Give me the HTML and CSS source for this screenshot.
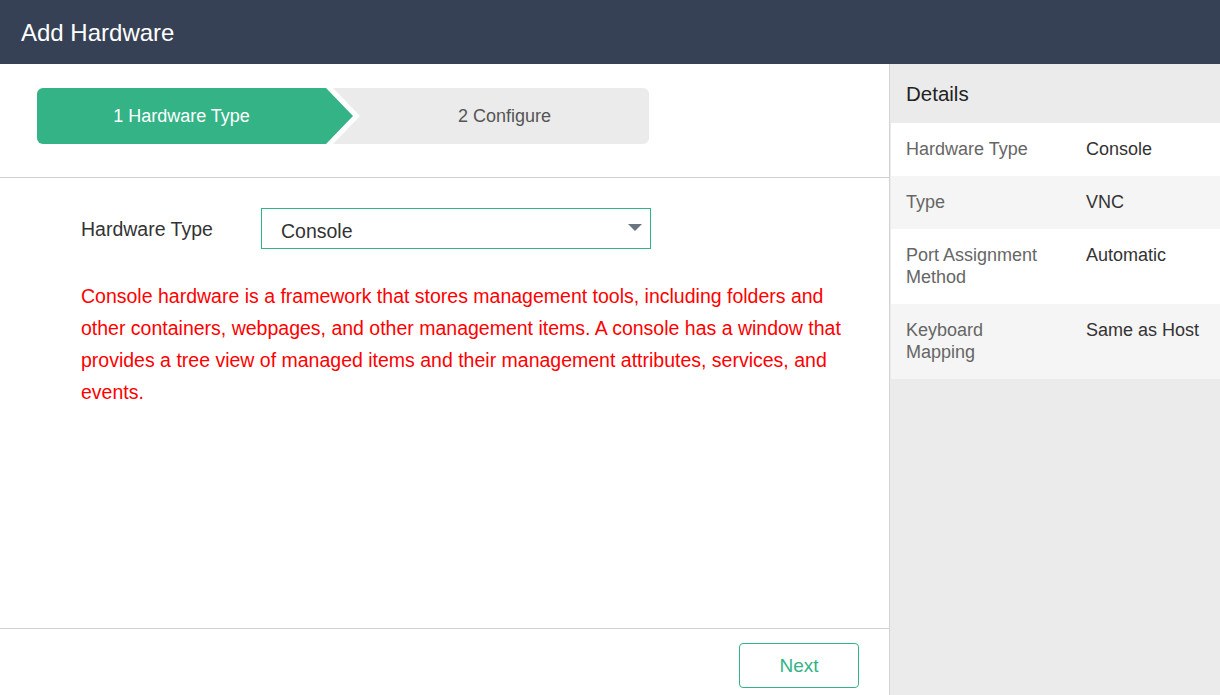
FILE: index.html
```html
<!DOCTYPE html>
<html lang="en">
<head>
    <meta charset="UTF-8">
    <meta name="viewport" content="width=device-width, initial-scale=1.0">
    <title>Add Hardware</title>
    <link rel="stylesheet" href="styles.css">
</head>
<body>
    <header class="title-bar">
        <h1>Add Hardware</h1>
    </header>

    <div class="wizard">
        <div class="main">
            <div class="steps-wrap">
                <div class="steps">
                    <div class="step step-active">1 Hardware Type</div>
                    <div class="step step-next">2 Configure</div>
                </div>
            </div>

            <div class="form">
                <div class="form-row">
                    <label class="form-label" for="hw-type">Hardware Type</label>
                    <div class="select">
                        <span id="hw-type">Console</span>
                        <span class="caret"></span>
                    </div>
                </div>
                <p class="hint">Console hardware is a framework that stores management tools, including folders and other containers, webpages, and other management items. A console has a window that provides a tree view of managed items and their management attributes, services, and events.</p>
            </div>

            <div class="actions">
                <button class="btn-next">Next</button>
            </div>
        </div>

        <aside class="details">
            <div class="details-title">Details</div>
            <div class="detail-row">
                <span class="detail-key">Hardware Type</span>
                <span class="detail-value">Console</span>
            </div>
            <div class="detail-row">
                <span class="detail-key">Type</span>
                <span class="detail-value">VNC</span>
            </div>
            <div class="detail-row">
                <span class="detail-key">Port Assignment Method</span>
                <span class="detail-value">Automatic</span>
            </div>
            <div class="detail-row">
                <span class="detail-key">Keyboard Mapping</span>
                <span class="detail-value">Same as Host</span>
            </div>
        </aside>
    </div>
</body>
</html>
```

FILE: styles.css
```css
html, body {
    margin: 0;
    padding: 0;
    height: 100%;
}

body {
    font-family: "Liberation Sans", Arial, sans-serif;
    color: #333;
    background-color: #fff;
    display: flex;
    flex-direction: column;
    overflow: hidden;
}

.title-bar {
    background-color: #364155;
    height: 64px;
    display: flex;
    align-items: center;
    padding: 2px 21px 0;
    box-sizing: border-box;
    flex-shrink: 0;
}

.title-bar h1 {
    margin: 0;
    color: white;
    font-size: 24px;
    font-weight: normal;
}

.wizard {
    flex: 1;
    display: flex;
    min-height: 0;
}

.main {
    width: 889px;
    display: flex;
    flex-direction: column;
    border-right: 1px solid #d4d4d4;
}

.steps-wrap {
    padding: 24px 37px 33px;
    border-bottom: 1px solid #d0d0d8;
}

.steps {
    display: flex;
    width: 612px;
    height: 56px;
    border-radius: 6px;
    overflow: hidden;
}

.step {
    display: flex;
    align-items: center;
    justify-content: center;
    padding-top: 1px;
    box-sizing: border-box;
    font-size: 18px;
}

.step-active {
    width: 316px;
    flex-shrink: 0;
    padding-right: 27px;
    background-color: #33b386;
    color: white;
    clip-path: polygon(0 0, calc(100% - 27px) 0, 100% 50%, calc(100% - 27px) 100%, 0 100%);
}

.step-next {
    flex: 1;
    margin-left: -20px;
    padding-left: 27px;
    background-color: #ebebeb;
    color: #555;
    clip-path: polygon(0 0, 100% 0, 100% 100%, 0 100%, 27px 50%);
}

.form {
    flex: 1;
    padding: 30px 40px 0 81px;
}

.form-row {
    display: flex;
    align-items: center;
}

.form-label {
    width: 180px;
    padding-top: 1px;
    font-size: 19.5px;
    color: #333;
}

.select {
    width: 390px;
    height: 41px;
    box-sizing: border-box;
    border: 1px solid #33b386;
    display: flex;
    align-items: center;
    justify-content: space-between;
    padding: 6px 8px 0 19px;
    font-size: 19.5px;
    color: #333;
}

.caret {
    width: 0;
    height: 0;
    border-left: 7px solid transparent;
    border-right: 7px solid transparent;
    border-top: 7px solid #6b7580;
    margin-top: -8px;
}

.hint {
    margin: 31px 0 0;
    color: #ff0000;
    font-size: 19.5px;
    line-height: 32px;
}

.actions {
    border-top: 1px solid #d0d0d8;
    height: 67px;
    display: flex;
    justify-content: flex-end;
    align-items: flex-start;
    padding: 14px 30px 0;
    box-sizing: border-box;
}

.btn-next {
    width: 120px;
    height: 45px;
    background: white;
    border: 1px solid #33b386;
    border-radius: 4px;
    color: #33b386;
    font-family: inherit;
    font-size: 19px;
    cursor: pointer;
}

.details {
    flex: 1;
    background-color: #ebebeb;
    padding-left: 1px;
}

.details-title {
    height: 59px;
    display: flex;
    align-items: center;
    padding: 1px 0 0 15px;
    box-sizing: border-box;
    font-size: 20.5px;
    color: #222;
}

.detail-row {
    display: flex;
    padding: 15px 10px 16px 15px;
    line-height: 22px;
    font-size: 18px;
    background-color: white;
}

.detail-row:nth-child(odd) {
    background-color: #f5f5f5;
}

.detail-key {
    width: 140px;
    margin-right: 40px;
    color: #666;
}

.detail-value {
    color: #333;
}
```
